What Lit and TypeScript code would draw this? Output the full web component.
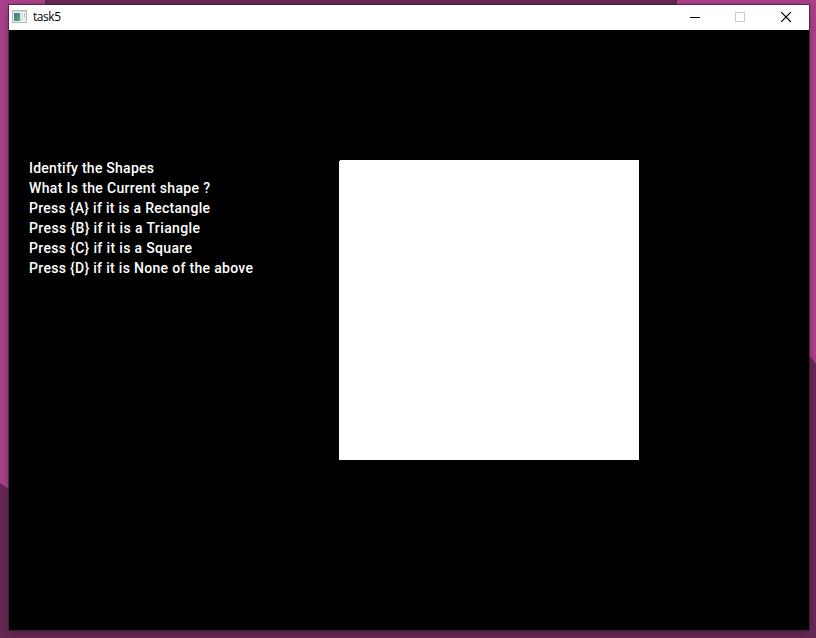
import { LitElement, html, css, svg } from "lit";
import { customElement } from "lit/decorators.js";

interface Line {
  text: string;
  width: number;
}

const LINES: Line[] = [
  { text: "Identify the Shapes", width: 125 },
  { text: "What Is the Current shape ?", width: 181 },
  { text: "Press {A} if it is a Rectangle", width: 181 },
  { text: "Press {B} if it is a Triangle", width: 171 },
  { text: "Press {C} if it is a Square", width: 163 },
  { text: "Press {D} if it is None of the above", width: 224 },
];

@customElement("app-root")
export class AppRoot extends LitElement {
  static styles = css`
    :host {
      display: block;
      box-sizing: border-box;
      width: 816px;
      height: 638px;
      padding: 5px 7px 8px 9px;
      overflow: hidden;
      position: relative;
      background: #652854;
    }
    .wallpaper {
      position: absolute;
      inset: 0;
      display: block;
    }
    .window {
      position: relative;
      width: 800px;
      height: 625px;
      display: flex;
      flex-direction: column;
      box-shadow: 0 0 0 1px rgba(50, 30, 45, 0.65), 0 2px 7px rgba(0, 0, 0, 0.3);
    }
    .titlebar {
      height: 25px;
      flex: none;
      display: flex;
      align-items: flex-start;
      background: #fff;
      color: #000;
    }
    .app-icon {
      display: block;
      margin: 5px 6px 0 3px;
    }
    .title {
      flex: 1;
      font: 12px/24px "Open Sans", "Noto Sans", sans-serif;
      letter-spacing: -0.45px;
    }
    .controls {
      display: block;
    }
    .client {
      flex: 1;
      display: flex;
      align-items: flex-start;
      background: #000;
      padding: 130px 20px 0;
    }
    .prompt {
      width: 310px;
      flex: none;
      display: flex;
      flex-direction: column;
      margin-top: -2px;
    }
    .line {
      display: block;
      height: 20px;
      width: 310px;
      fill: #fff;
      font: 500 14px Roboto, "Liberation Sans", sans-serif;
    }
    .shape {
      display: block;
      flex: none;
    }
  `;

  render() {
    return html`
      <svg class="wallpaper" width="816" height="638" viewBox="0 0 816 638">
        <rect width="816" height="638" fill="#652854" />
        <path d="M0 0H45V300H9V489L0 483Z" fill="#aa3f89" />
        <path d="M677 0H816V364L809 355V100H677Z" fill="#aa3f89" />
      </svg>
      <div class="window">
        <div class="titlebar">
          <svg class="app-icon" width="15" height="13" viewBox="0 0 15 13">
            <rect x="0.5" y="0.5" width="14" height="12" fill="#f2f2f2" stroke="#b5b8bb" />
            <path d="M1 1.5H14" stroke="#d3d6d8" />
            <defs>
              <linearGradient id="pane" x1="0" y1="0" x2="1" y2="1">
                <stop offset="0" stop-color="#41719b" />
                <stop offset="1" stop-color="#55ad78" />
              </linearGradient>
            </defs>
            <rect x="2" y="3" width="6" height="8" fill="url(#pane)" />
            <rect x="8" y="3" width="3" height="8" fill="#dfe3e4" />
            <path d="M12.5 3V8" stroke="#b9c6c8" />
          </svg>
          <span class="title">task5</span>
          <svg class="controls" width="138" height="25" viewBox="0 0 138 25" fill="none">
            <path d="M19 12.5H29" stroke="#000" />
            <rect x="64.5" y="7.5" width="9" height="9" stroke="#ccc" />
            <path d="M110.5 7.5L119.5 16.5M119.5 7.5L110.5 16.5" stroke="#000" stroke-width="1.1" stroke-linecap="square" />
          </svg>
        </div>
        <div class="client">
          <div class="prompt">
            ${LINES.map(
              (l) => html`<svg class="line">
                ${svg`<text x="0" y="15" textLength=${l.width}>${l.text}</text>`}
              </svg>`
            )}
          </div>
          <svg class="shape" width="300" height="300" viewBox="0 0 300 300">
            <path d="M1 0H300V300H0V1H1Z" fill="#fff" />
          </svg>
        </div>
      </div>
    `;
  }
}
